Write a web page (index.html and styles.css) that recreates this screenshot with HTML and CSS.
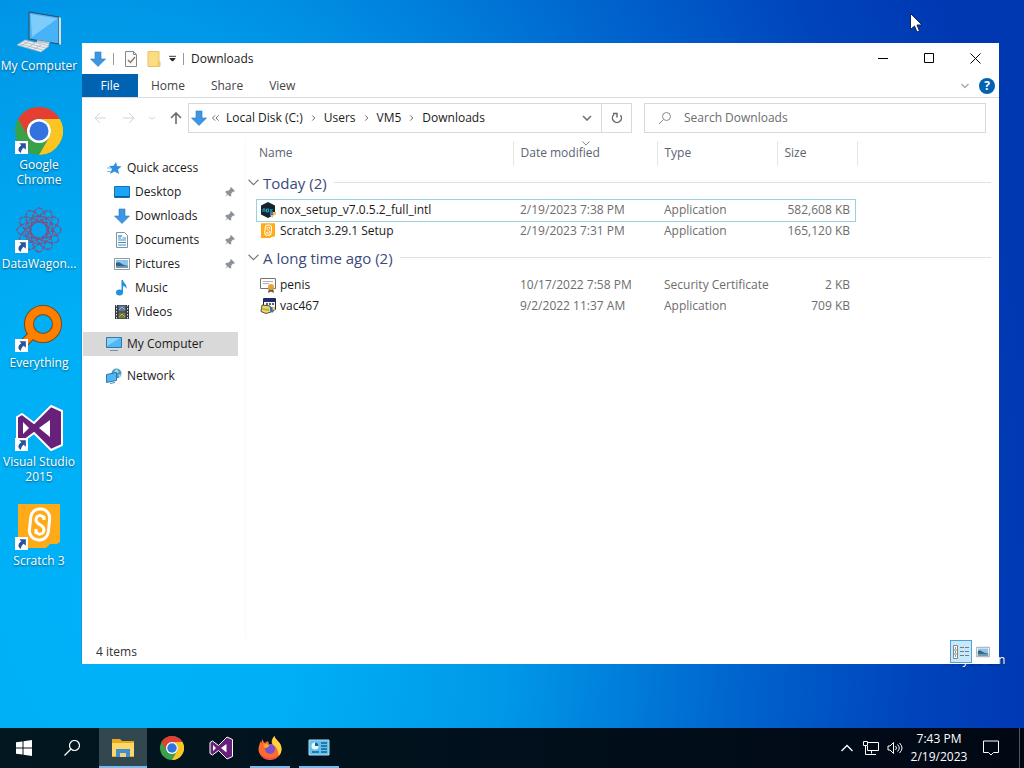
FILE: index.html
```html
<!DOCTYPE html>
<html lang="en">
<head>
    <meta charset="UTF-8">
    <meta name="viewport" content="width=device-width, initial-scale=1.0">
    <title>Downloads</title>
    <link rel="stylesheet" href="styles.css">
</head>
<body>
    <!-- shared icons -->
    <svg class="defs" aria-hidden="true">
        <symbol id="down" viewBox="0 0 16 16">
            <path d="M5 1h6v7h4.500L8 15.500.5 8H5z" fill="#3d96e3" stroke="#2478c4" stroke-width=".6"/>
        </symbol>
        <symbol id="chrome" viewBox="0 0 48 48">
            <circle cx="24" cy="24" r="24" fill="#3aa14b"/>
            <path d="M3.200 12A24 24 0 0 1 44.800 12H24a12 12 0 0 0-10.400 18z" fill="#e53e32"/>
            <path d="M44.800 12A24 24 0 0 1 24 48l10.400-18A12 12 0 0 0 24 12z" fill="#fcc522"/>
            <circle cx="24" cy="24" r="12" fill="#fff"/>
            <circle cx="24" cy="24" r="9.500" fill="#3373e0"/>
        </symbol>
        <symbol id="vs" viewBox="0 0 48 48">
            <path d="M2 13l5-3 12 9L36 2l11 5v34l-11 5-17-17-12 9-5-3z" fill="#68217a" stroke="#fff" stroke-width="2" stroke-linejoin="round"/>
            <path d="M8 18v12l6-6zM35 16L24 24l11 9z" fill="#fff"/>
        </symbol>
        <symbol id="shortcut" viewBox="0 0 12 12">
            <path d="M0 0h12v12H0z" fill="#fff"/>
            <path d="M4 2h6v6L8 6.300C6.500 7.500 5.500 8.800 5.500 11 2 9 2.800 6 5.800 3.900z" fill="#29539b"/>
        </symbol>
        <symbol id="pin" viewBox="0 0 12 12">
            <path d="M7 1l4 4-1 .7-.8-.2-2 2 .1 2L6 10.800 3.800 8.500 1 11l2-3L1.200 6l1.200-1.300 2 .1 2-2L6.200 2z" fill="#8b9299"/>
        </symbol>
        <symbol id="picture" viewBox="0 0 16 16">
            <path d="M.5 2.500h15v11H.5z" fill="#fff" stroke="#8f9aa3"/>
            <path d="M2 4h12v8H2z" fill="#8cc4ec"/>
            <path d="M2 7c3-2 5 1 8 2l4 1v2H2z" fill="#35617f"/>
            <path d="M2 10h12v2H2z" fill="#7197ab"/>
        </symbol>
        <symbol id="chevron" viewBox="0 0 10 6">
            <path d="M.5.500l4.500 4.500L9.500.5" fill="none" stroke="currentColor"/>
        </symbol>
        <symbol id="scratch" viewBox="0 0 48 48">
            <path d="M3 1h42v38l-3 2h-7l-4 4H3z" fill="#ffab19"/>
            <rect x="15" y="6" width="19" height="31" rx="9" fill="#ffab19" stroke="#fff" stroke-width="3" transform="rotate(6 25 22)"/>
            <path d="M29 17c0-6-8-6-8 0 0 5 8 4 8 10 0 5-8 6-8 0M29 13v4M21 26v5" fill="none" stroke="#fff" stroke-width="3"/>
        </symbol>
    </svg>

    <main class="desktop">
        <a class="shortcut" href="#">
            <svg viewBox="0 0 48 48">
                <path d="M14 4l30 5v27l-30-5z" fill="#47b2f5" stroke="#33485a"/>
                <path d="M15.500 6l27 4.500L17 29z" fill="#7dccfa"/>
                <path d="M44 9l2 1v27l-2-1z" fill="#d5dde2"/>
                <path d="M22 32l13 2-2 4-11-2z" fill="#b8c4cc"/>
                <path d="M20 34l14 2-3 4-13-2z" fill="#e7edf0"/>
                <path d="M10 32l24 6-8 6-24-7z" fill="#e8edf0" stroke="#aab5bd" stroke-width=".7"/>
                <path d="M8 34l23 6M5 36l23 6M14 33l-8 5M20 35l-8 5M26 37l-8 5" stroke="#a3afb8" stroke-width=".7"/>
            </svg>
            <span>My Computer</span>
        </a>
        <a class="shortcut" href="#">
            <svg viewBox="0 0 48 48"><use href="#chrome"/></svg>
            <svg class="overlay"><use href="#shortcut"/></svg>
            <span>Google Chrome</span>
        </a>
        <a class="shortcut" href="#">
            <svg viewBox="0 0 48 48">
                <g fill="none" stroke="#7d5285" stroke-width="1.300" stroke-dasharray="5 1">
                    <ellipse cx="24" cy="24" rx="22" ry="8"/>
                    <ellipse cx="24" cy="24" rx="22" ry="8" transform="rotate(30 24 24)"/>
                    <ellipse cx="24" cy="24" rx="22" ry="8" transform="rotate(60 24 24)"/>
                    <ellipse cx="24" cy="24" rx="22" ry="8" transform="rotate(90 24 24)"/>
                    <ellipse cx="24" cy="24" rx="22" ry="8" transform="rotate(120 24 24)"/>
                    <ellipse cx="24" cy="24" rx="22" ry="8" transform="rotate(150 24 24)"/>
                    <circle cx="24" cy="24" r="14"/>
                </g>
                <circle cx="24" cy="24" r="3" fill="#1c9be8"/>
            </svg>
            <svg class="overlay"><use href="#shortcut"/></svg>
            <span>DataWagon...</span>
        </a>
        <a class="shortcut" href="#">
            <svg viewBox="0 0 48 48">
                <path d="M17 30L5 42" stroke="#7a4a10" stroke-width="9"/>
                <circle cx="28" cy="19" r="14" fill="none" stroke="#7a4a10" stroke-width="10"/>
                <path d="M18 29L5 42" stroke="#ff8000" stroke-width="7"/>
                <circle cx="28" cy="19" r="14" fill="none" stroke="#ff8000" stroke-width="8"/>
            </svg>
            <svg class="overlay"><use href="#shortcut"/></svg>
            <span>Everything</span>
        </a>
        <a class="shortcut" href="#">
            <svg viewBox="0 0 48 48"><use href="#vs"/></svg>
            <svg class="overlay"><use href="#shortcut"/></svg>
            <span>Visual Studio 2015</span>
        </a>
        <a class="shortcut" href="#">
            <svg viewBox="0 0 48 48"><use href="#scratch"/></svg>
            <svg class="overlay"><use href="#shortcut"/></svg>
            <span>Scratch 3</span>
        </a>
        <a class="shortcut recycle" href="#">
            <svg viewBox="0 0 48 48"><path d="M12 8h24l-4 36H16z" fill="#e4ecf2"/></svg>
            <span>Recycle Bin</span>
        </a>

        <section class="window">
            <header class="titlebar">
                <div class="quick-tools">
                    <svg class="icon"><use href="#down"/></svg>
                    <i class="bar"></i>
                    <button aria-label="Properties">
                        <svg class="icon" viewBox="0 0 16 16"><path d="M2.500.5h8l3 3v12h-11z" fill="#fafafa" stroke="#84888c"/><path d="M10.500.5v3h3" fill="none" stroke="#84888c"/><path d="M5 9l2.500 2.500L12 6" fill="none" stroke="#8c7a6e" stroke-width="1.500"/></svg>
                    </button>
                    <button aria-label="New folder">
                        <svg class="icon" viewBox="0 0 16 16"><path d="M2 .5h11v10h1v5H2z" fill="#fbdc82" stroke="#e9c362"/><path d="M11.500 10h2.500v5.500h-2.500z" fill="#f3cb62"/></svg>
                    </button>
                    <button aria-label="Customize toolbar">
                        <svg class="small" viewBox="0 0 8 8"><path d="M0 1.500h8M1 4h6L4 7z" stroke="#222" fill="#222"/></svg>
                    </button>
                    <i class="bar"></i>
                </div>
                <h1>Downloads</h1>
                <div class="window-buttons">
                    <button aria-label="Minimize"><svg viewBox="0 0 11 11"><path d="M0 5.500h10" stroke="#000"/></svg></button>
                    <button aria-label="Maximize"><svg viewBox="0 0 11 11"><path d="M.5.5h9v9h-9z" fill="none" stroke="#000"/></svg></button>
                    <button aria-label="Close"><svg viewBox="0 0 11 11"><path d="M.5.5l10 10M10.500.5l-10 10" stroke="#000"/></svg></button>
                </div>
            </header>

            <nav class="ribbon">
                <button class="file">File</button>
                <button>Home</button>
                <button>Share</button>
                <button>View</button>
                <div class="ribbon-end">
                    <svg class="chev" viewBox="0 0 10 6"><path d="M1.500 1l3.500 3.500L8.500 1" fill="none" stroke="#aaa" stroke-width="1.500"/></svg>
                    <button class="help" aria-label="Help">?</button>
                </div>
            </nav>

            <div class="address-row">
                <div class="arrows">
                    <button aria-label="Back"><svg viewBox="0 0 12 12"><path d="M12 6H1M6 1L1 6l5 5" fill="none" stroke="#d2d2d2"/></svg></button>
                    <button aria-label="Forward"><svg viewBox="0 0 12 12"><path d="M0 6h11M6 1l5 5-5 5" fill="none" stroke="#d2d2d2"/></svg></button>
                    <button class="recent" aria-label="Recent locations"><svg viewBox="0 0 12 12"><path d="M3 5l3 2 3-2" fill="none" stroke="#d2d2d2"/></svg></button>
                    <button aria-label="Up"><svg viewBox="0 0 12 12"><path d="M6 12V1M1 6l5-5 5 5" fill="none" stroke="#6a6a6a" stroke-width="1.600"/></svg></button>
                </div>
                <div class="address">
                    <svg class="icon"><use href="#down"/></svg>
                    <svg class="crumb-sep" viewBox="0 0 8 8"><path d="M3.500 1l-3 3 3 3M7.500 1l-3 3 3 3" fill="none" stroke="#555"/></svg>
                    <a href="#">Local Disk (C:)</a>
                    <svg class="crumb-sep" viewBox="0 0 8 8"><path d="M2.500 1l3 3-3 3" fill="none" stroke="#555"/></svg>
                    <a href="#">Users</a>
                    <svg class="crumb-sep" viewBox="0 0 8 8"><path d="M2.500 1l3 3-3 3" fill="none" stroke="#555"/></svg>
                    <a href="#">VM5</a>
                    <svg class="crumb-sep" viewBox="0 0 8 8"><path d="M2.500 1l3 3-3 3" fill="none" stroke="#555"/></svg>
                    <a href="#">Downloads</a>
                    <button class="history" aria-label="Previous locations"><svg viewBox="0 0 10 6"><path d="M1 1l4 4 4-4" fill="none" stroke="#707070" stroke-width="1.600"/></svg></button>
                    <button class="refresh" aria-label="Refresh"><svg viewBox="0 0 12 12"><path d="M3 2.500A4.500 4.500 0 1 0 9.500 3.200M2 1.500h4v4" fill="none" stroke="#666" stroke-width="1.400"/></svg></button>
                </div>
                <label class="search">
                    <svg viewBox="0 0 14 14"><circle cx="8.500" cy="5.500" r="4" fill="none" stroke="#8c8c8c"/><path d="M5.500 8.500L1 13" stroke="#8c8c8c"/></svg>
                    <input type="text" placeholder="Search Downloads" aria-label="Search Downloads">
                </label>
            </div>

            <div class="content">
                <nav class="sidebar">
                    <a href="#"><svg class="icon" viewBox="0 0 16 16"><path d="M10 2l1 4 4.500.5-3.500 3 1 4.500-4.500-2.500-4.500 2.500 2-5L3 6l4.500-.2z" fill="#2e8fdc"/><path d="M1 8h4M1 11.500h4" stroke="#79b9eb"/></svg>Quick access</a>
                    <a class="sub" href="#"><svg class="icon" viewBox="0 0 16 16"><path d="M.5 2.500h15v11H.5z" fill="#1ea4f5" stroke="#1372b8"/><path d="M1 12.500h14" stroke="#0d5d9c"/></svg>Desktop<svg class="pin"><use href="#pin"/></svg></a>
                    <a class="sub" href="#"><svg class="icon"><use href="#down"/></svg>Downloads<svg class="pin"><use href="#pin"/></svg></a>
                    <a class="sub" href="#"><svg class="icon" viewBox="0 0 16 16"><path d="M2.500.5h8l3 3v12h-11z" fill="#fff" stroke="#85929b"/><path d="M4 6h3M4 8h8M4 10.500h8M4 13h8M8.500 6H12" stroke="#3a8ec4"/><path d="M4 3h4v2H4z" fill="#78b7dd"/></svg>Documents<svg class="pin"><use href="#pin"/></svg></a>
                    <a class="sub" href="#"><svg class="icon"><use href="#picture"/></svg>Pictures<svg class="pin"><use href="#pin"/></svg></a>
                    <a class="sub" href="#"><svg class="icon" viewBox="0 0 16 16"><ellipse cx="5.500" cy="12.500" rx="3.500" ry="3" fill="#1e93dc"/><path d="M7.500 0H9c0 3 4.500 4 3.500 9-.5-2-2-3-3.500-3v7H7.500z" fill="#1e93dc"/></svg>Music</a>
                    <a class="sub" href="#"><svg class="icon" viewBox="0 0 16 16"><path d="M1 1h14v14H1z" fill="#363b40"/><path d="M4.500 1.500h7v6h-7z" fill="#5379a8"/><path d="M4.500 8.500h7v6h-7z" fill="#6c7c48"/><path d="M5 6l3-3 3 3M5 13l3-3 3 3" stroke="#d4a84c" fill="none"/><path d="M2.500 1v14M13.500 1v14" stroke="#e1e1e1" stroke-dasharray="1.500 1.500"/></svg>Videos</a>
                    <a class="current" href="#"><svg class="icon" viewBox="0 0 16 16"><path d="M.5 1.500h15v10H.5z" fill="#4db8f6" stroke="#3478a5"/><path d="M1 2h13L1 10z" fill="#87d2fb"/><path d="M4 14.500h8" stroke="#6c93ab"/></svg>My Computer</a>
                    <a class="network" href="#"><svg class="icon" viewBox="0 0 16 16"><circle cx="10.500" cy="5.500" r="5" fill="#4a98bd"/><path d="M8 3l3-2 2 3-3 2zM12 7l3-1-1 4z" fill="#a6d5e5"/><path d="M.5 6.500l10-2v8l-10 2z" fill="#4eb7f4" stroke="#2f7bae"/><path d="M4 15.500l5-1" stroke="#568eab"/></svg>Network</a>
                </nav>

                <div class="files">
                    <table>
                        <colgroup>
                            <col class="col-name">
                            <col class="col-date">
                            <col class="col-type">
                            <col class="col-size">
                            <col>
                        </colgroup>
                        <thead>
                            <tr>
                                <th>Name</th>
                                <th>Date modified<svg class="sort"><use href="#chevron"/></svg></th>
                                <th>Type</th>
                                <th>Size</th>
                                <th></th>
                            </tr>
                        </thead>
                        <tbody>
                            <tr class="group"><th colspan="5"><div><svg class="chev"><use href="#chevron"/></svg>Today (2)</div></th></tr>
                            <tr class="focused">
                                <td><div class="name"><svg class="icon" viewBox="0 0 16 16"><path d="M8 0l7 3.500v9L8 16l-7-3.500v-9z" fill="#13262f"/><path d="M3 10V7h2v3M6.500 7h2v3h-2zM10 7l2.500 3M12.500 7L10 10" fill="none" stroke="#2ba6c9"/><path d="M10 10h3v3h-3z" fill="#3b79cb"/><path d="M13 10h3v3h-3zM10 13h3v3z" fill="#f0c24b"/></svg>nox_setup_v7.0.5.2_full_intl</div></td>
                                <td>2/19/2023 7:38 PM</td><td>Application</td><td>582,608 KB</td><td></td>
                            </tr>
                            <tr>
                                <td><div class="name"><svg class="icon"><use href="#scratch"/></svg>Scratch 3.29.1 Setup</div></td>
                                <td>2/19/2023 7:31 PM</td><td>Application</td><td>165,120 KB</td><td></td>
                            </tr>
                            <tr class="group"><th colspan="5"><div><svg class="chev"><use href="#chevron"/></svg>A long time ago (2)</div></th></tr>
                            <tr>
                                <td><div class="name"><svg class="icon" viewBox="0 0 16 16"><path d="M.5 1.500h15v10H.5z" fill="#fff" stroke="#77736c"/><path d="M3 4.500h10M3 6.500h6" stroke="#adb3b8"/><path d="M9 11l-1 5 3-1.500L14 16l-1-5z" fill="#6c553d"/><circle cx="11" cy="10" r="3" fill="#e5a532"/></svg>penis</div></td>
                                <td>10/17/2022 7:58 PM</td><td>Security Certificate</td><td>2 KB</td><td></td>
                            </tr>
                            <tr>
                                <td><div class="name"><svg class="icon" viewBox="0 0 16 16"><path d="M3.500.5h12v11h-12z" fill="#f8f8f4" stroke="#26294c"/><path d="M4 1h11v3H4z" fill="#1c2a7a"/><path d="M6 6h2M9 6h2M12 6h2" stroke="#333" stroke-width="1.500"/><path d="M2 7l8 1 1 6-5 1.500-5-2z" fill="#eadb71" stroke="#555330"/><path d="M1 10l8 1v2l-6-1z" fill="#b8ad48"/><path d="M10 9h5v3l-3 3-2-3z" fill="#3570b8"/><path d="M12.500 9H15v3h-2.500z" fill="#f3ca42"/></svg>vac467</div></td>
                                <td>9/2/2022 11:37 AM</td><td>Application</td><td>709 KB</td><td></td>
                            </tr>
                        </tbody>
                    </table>
                </div>
            </div>

            <footer class="status">
                <span>4 items</span>
                <div class="views">
                    <button class="on" aria-label="Details view"><svg viewBox="0 0 18 14"><path d="M1.500.5h4v13h-4zM1.500 5h4M1.500 9h4" fill="#fff" stroke="#8b8577"/><path d="M3 3h1M3 7h1M3 11h1" stroke="#2b7fc4" stroke-width="1.500"/><path d="M8 2.500h4M8 6.500h4M8 10.500h4M13 2.500h4M13 6.500h4M13 10.500h4" stroke="#6d7f8b"/></svg></button>
                    <button aria-label="Large icons view"><svg viewBox="0 1 16 14"><use href="#picture" width="16" height="16"/></svg></button>
                </div>
            </footer>
        </section>

        <svg class="cursor" viewBox="0 0 13 20"><path d="M.5.5v16l4-3.500 2.500 6 2.500-1-2.500-6h5z" fill="#fff" stroke="#10245c"/></svg>
    </main>

    <footer class="taskbar">
        <button aria-label="Start"><svg viewBox="0 0 16 16"><path d="M0 2.300l6.500-.9v6.100H0zM7.500 1.200L16 0v7.500H7.500zM0 8.500h6.500v6.100L0 13.700zM7.500 8.500H16V16l-8.500-1.200z" fill="#fff"/></svg></button>
        <button aria-label="Search"><svg viewBox="0 0 16 16"><circle cx="10.500" cy="5.500" r="5" fill="none" stroke="#fff" stroke-width="1.200"/><path d="M7 9L.5 15.500" stroke="#fff" stroke-width="1.300"/></svg></button>
        <div class="apps">
            <button class="active" aria-label="File Explorer"><svg class="app" viewBox="0 0 24 24"><path d="M1 3h8l2 2h12v16H1z" fill="#e8a91c"/><path d="M1 7h22v13H1z" fill="#ffd767"/><path d="M5 21v-8h14v8h-4v-4H9v4z" fill="#3f8fd0"/><path d="M9 17h6v4H9z" fill="#f6d276"/></svg></button>
            <button aria-label="Chrome"><svg class="app"><use href="#chrome"/></svg></button>
            <button aria-label="Visual Studio"><svg class="app"><use href="#vs"/></svg></button>
            <button class="running" aria-label="Firefox"><svg class="app" viewBox="0 0 24 24"><path d="M4 3l2.500 4L10 5l1 3h3c-1-3 0-6 2.500-8 .5 4 7 6 7 13a11.500 11 0 0 1-23 0C.5 10 2 8 2.500 5l1 2z" fill="#ff6b2b"/><path d="M16.500 0c.5 4 7 6 7 13 0 3-1 5-3 7 0-6-2-9-6-12-1-3 0-6 2-8z" fill="#ffd53d"/><path d="M1 15c3 8 15 10 21 3a11.500 11 0 0 1-21-3z" fill="#ef347c"/><circle cx="12" cy="13" r="5" fill="#7d50d2"/><path d="M5 9c3-2 5-1 7 1-2 0-2 2-5 2z" fill="#ffa62b"/></svg></button>
            <button class="running" aria-label="Control Panel"><svg class="app" viewBox="0 0 24 24"><path d="M2 4h20v15H2z" fill="#62c1ef" stroke="#a8def6"/><circle cx="8" cy="10" r="3.500" fill="#f1f8fc"/><path d="M8 10V6.500A3.500 3.500 0 0 1 11.500 10z" fill="#146091"/><path d="M14 7h6M14 10h6M14 13h6M5 16h7M14 16h6" stroke="#146091" stroke-width="1.300"/></svg></button>
        </div>
        <div class="tray">
            <button aria-label="Show hidden icons"><svg viewBox="0 0 16 16"><path d="M2.500 11L8 5.500l5.500 5.500" fill="none" stroke="#fff" stroke-width="1.300"/></svg></button>
            <button aria-label="Network"><svg viewBox="0 0 16 16"><path d="M5 2.500h10.500v8H4.500V6M8.500 10.500v3M5 14.500h8M.5 1.500h4v4h-4zM2.500 5.500v9H5" fill="none" stroke="#fff"/></svg></button>
            <button aria-label="Volume"><svg viewBox="0 0 16 16"><path d="M1 6h2l3.500-3.500v11L3 10H1z" fill="none" stroke="#fff"/><path d="M8.500 6q2 2 0 4M10.500 4.500q3.500 3.500 0 7M12.500 3q5 5 0 10" fill="none" stroke="#fff"/></svg></button>
            <time class="clock" datetime="2023-02-19T19:43">7:43 PM<br>2/19/2023</time>
            <button class="notify" aria-label="Notifications"><svg viewBox="0 0 16 16"><path d="M.5 1h15v11.500h-5L8 15l-2.500-2.500h-5z" fill="none" stroke="#fff"/></svg></button>
            <i class="peek"></i>
        </div>
    </footer>
</body>
</html>
```

FILE: styles.css
```css
* {
    box-sizing: border-box;
}
body {
    margin: 0;
    height: 100vh;
    display: flex;
    flex-direction: column;
    overflow: hidden;
    font-family: "Open Sans", "Noto Sans", sans-serif;
    font-size: 12px;
    line-height: 16px;
    color: #1a1a1a;
    background: radial-gradient(88% 170% at 10% 78%, #00b2fa 0%, #00aff5 22%, #0098e8 45%, #0068cf 69%, #0044bc 90%, #0038b2 104%);
}
button {
    display: flex;
    align-items: center;
    justify-content: center;
    padding: 0;
    border: none;
    background: none;
    font: inherit;
    color: inherit;
}
a {
    color: inherit;
    text-decoration: none;
}
svg {
    display: block;
    flex: none;
}
.defs {
    position: absolute;
    width: 0;
    height: 0;
}
.icon {
    width: 16px;
    height: 16px;
}
.chev {
    width: 10px;
    height: 6px;
    color: #777;
}

/* desktop */
.desktop {
    position: relative;
    flex: 1;
    min-height: 0;
    display: grid;
    grid-template-columns: 78px 1fr 78px;
    grid-auto-rows: 99px;
    padding: 8px 11px 0 0;
}
.shortcut {
    grid-column: 1;
    position: relative;
    display: flex;
    flex-direction: column;
    align-items: center;
    gap: 2px;
    line-height: 15px;
    text-align: center;
    color: #fff;
    text-shadow: 0 1px 2px rgba(0, 0, 0, 0.5);
}
.shortcut svg {
    width: 48px;
    height: 48px;
}
.shortcut .overlay {
    position: absolute;
    left: 15px;
    top: 34px;
    width: 13px;
    height: 13px;
}
.recycle {
    grid-column: 3;
    grid-row: 7;
}
.cursor {
    position: absolute;
    left: 910px;
    top: 13px;
    width: 13px;
    height: 20px;
}

/* explorer window */
.window {
    position: absolute;
    top: 43px;
    right: 25px;
    bottom: 64px;
    left: 81px;
    display: flex;
    flex-direction: column;
    background: #fff;
    border-left: 1px solid #0f9ade;
}
.titlebar {
    display: flex;
    align-items: center;
    height: 31px;
}
.quick-tools {
    display: flex;
    align-items: center;
    gap: 7px;
    padding-left: 8px;
}
.quick-tools .bar {
    width: 1px;
    height: 12px;
    background: #999;
}
.quick-tools .bar + button {
    margin-left: 2px;
}
.small {
    width: 7px;
    height: 7px;
}
.titlebar h1 {
    margin: 0 0 0 7px;
    font-size: 12px;
    font-weight: 400;
}
.window-buttons {
    display: flex;
    margin-left: auto;
    padding-right: 1px;
}
.window-buttons button {
    width: 46px;
    height: 30px;
}
.window-buttons svg {
    width: 11px;
    height: 11px;
}
.ribbon {
    display: flex;
    height: 24px;
    border-bottom: 1px solid #dadbdc;
    color: #444;
}
.ribbon button {
    padding: 0 13px;
}
.ribbon .file {
    width: 56px;
    background: #0063b1;
    color: #fff;
}
.ribbon-end {
    display: flex;
    align-items: center;
    gap: 9px;
    margin-left: auto;
    padding-right: 4px;
}
.ribbon .help {
    width: 16px;
    height: 16px;
    padding: 0;
    border-radius: 50%;
    background: #0063b1;
    color: #fff;
    font-weight: 700;
}
.address-row {
    display: flex;
    align-items: center;
    height: 40px;
    padding-right: 13px;
}
.arrows {
    display: flex;
    gap: 4px;
    width: 106px;
    padding-left: 6px;
}
.arrows button {
    width: 26px;
    height: 24px;
}
.arrows .recent {
    width: 14px;
}
.arrows svg {
    width: 12px;
    height: 12px;
}
.address {
    flex: 440;
    display: flex;
    align-items: center;
    gap: 7px;
    height: 30px;
    padding-left: 2px;
    border: 1px solid #d9d9d9;
}
.address .icon {
    margin-right: -2px;
}
.crumb-sep {
    width: 7px;
    height: 8px;
}
.history {
    width: 28px;
    height: 28px;
    margin-left: auto;
}
.history svg {
    width: 10px;
    height: 6px;
}
.refresh {
    width: 30px;
    height: 28px;
    margin-left: -7px;
    border-left: 1px solid #d9d9d9;
}
.refresh svg {
    width: 12px;
    height: 12px;
}
.search {
    flex: 327;
    display: flex;
    align-items: center;
    gap: 12px;
    height: 30px;
    margin-left: 12px;
    padding-left: 13px;
    border: 1px solid #d9d9d9;
}
.search svg {
    width: 14px;
    height: 14px;
}
.search input {
    flex: 1;
    min-width: 0;
    padding: 0;
    border: none;
    outline: none;
    background: none;
    font: inherit;
}
.search input::placeholder {
    color: #6d6d6d;
    opacity: 1;
}
.content {
    flex: 1;
    min-height: 0;
    display: flex;
}

/* navigation pane */
.sidebar {
    width: 164px;
    padding: 18px 7px 0 1px;
    border-right: 1px solid #fafafa;
}
.sidebar a {
    display: flex;
    align-items: center;
    gap: 5px;
    height: 24px;
    padding-left: 23px;
}
.sidebar .sub {
    padding-left: 31px;
}
.sidebar .pin {
    width: 12px;
    height: 12px;
    margin-left: auto;
    margin-right: 2px;
}
.sidebar .current {
    margin: 8px 0;
    background: #d9d9d9;
}

/* file list */
.files {
    flex: 1;
    padding: 3px 8px 0 2px;
}
table {
    width: 100%;
    table-layout: fixed;
    border-collapse: collapse;
    color: #6d6d6d;
}
.col-name {
    width: 265px;
}
.col-date {
    width: 144px;
}
.col-type {
    width: 120px;
}
.col-size {
    width: 80px;
}
th,
td {
    padding: 0 0 0 7px;
    font-weight: 400;
    text-align: left;
    white-space: nowrap;
}
thead th {
    position: relative;
    height: 25px;
    padding-bottom: 2px;
    border-right: 1px solid #e5e5e5;
    color: #5a6472;
}
thead th:first-child {
    padding-left: 11px;
}
thead th:last-child {
    border: none;
}
.sort {
    position: absolute;
    left: 68px;
    top: 0;
    width: 8px;
    height: 5px;
}
td {
    height: 21px;
}
td:first-child {
    padding-left: 12px;
}
td:nth-child(4) {
    padding-right: 7px;
    text-align: right;
}
.name {
    display: flex;
    align-items: center;
    gap: 4px;
    color: #1a1a1a;
}
.group th {
    height: 33px;
    padding: 0;
    font-size: 15px;
    line-height: 20px;
    color: #3b4a7c;
}
.group div {
    display: flex;
    align-items: center;
    gap: 4px;
}
.group .chev {
    width: 11px;
    height: 7px;
}
.group div::after {
    content: "";
    flex: 1;
    height: 1px;
    margin-left: 3px;
    background: #e2e2e2;
}
.focused td:first-child {
    position: relative;
}
.focused td:first-child::after {
    content: "";
    position: absolute;
    top: 0;
    left: 8px;
    width: 598px;
    height: 21px;
    border: 1px solid #99d1e0;
}
.status {
    display: flex;
    align-items: center;
    height: 25px;
    padding: 0 9px 0 14px;
    color: #333;
}
.views {
    display: flex;
    gap: 4px;
    margin-left: auto;
}
.views button {
    width: 14px;
}
.views button svg {
    width: 14px;
    height: 12px;
}
.views .on {
    width: 22px;
    height: 23px;
    border: 1px solid #4ba3d9;
    background: #c8e8fa;
}
.views .on svg {
    width: 18px;
    height: 14px;
}

/* taskbar */
.taskbar {
    display: flex;
    height: 40px;
    background: linear-gradient(90deg, #021720, #01101c 50%, #010814);
    color: #fff;
}
.taskbar > button {
    width: 48px;
}
.taskbar svg {
    width: 16px;
    height: 16px;
}
.taskbar .app {
    width: 24px;
    height: 24px;
}
.apps {
    display: flex;
    gap: 1px;
    margin-left: 3px;
}
.apps button {
    position: relative;
    width: 48px;
}
.apps .active {
    background: #334751;
}
.active::after,
.running::after {
    content: "";
    position: absolute;
    right: 0;
    bottom: 0;
    left: 0;
    height: 2px;
    background: #76b9ed;
}
.running::after {
    right: 4px;
    left: 4px;
}
.tray {
    display: flex;
    align-items: center;
    margin-left: auto;
}
.tray button {
    width: 24px;
    height: 40px;
}
.clock {
    width: 64px;
    line-height: 18px;
    text-align: center;
}
.tray .notify {
    width: 40px;
}
.peek {
    width: 5px;
    height: 40px;
    margin-left: 8px;
    border-left: 1px solid #4d5661;
}
```
